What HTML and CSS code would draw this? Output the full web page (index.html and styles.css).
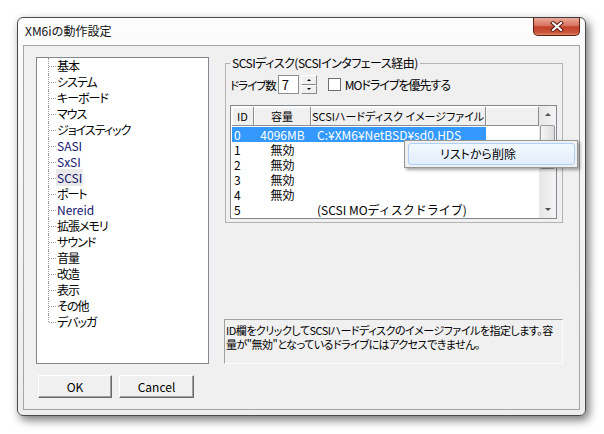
FILE: index.html
```html
<!DOCTYPE html>
<html lang="ja">
<head>
    <meta charset="UTF-8">
    <title>XM6iの動作設定</title>
    <link rel="stylesheet" href="styles.css">
</head>
<body>
    <div class="window">
        <div class="titlebar">
            <span class="title">XM6iの動作設定</span>
            <button class="close-btn">
                <svg width="14" height="11" viewBox="0 0 14 11">
                    <path d="M3 2 L11 9 M11 2 L3 9" stroke="#5a1c14" stroke-width="4" stroke-linecap="square" fill="none"/>
                    <path d="M3 2 L11 9 M11 2 L3 9" stroke="#ffffff" stroke-width="2" stroke-linecap="square" fill="none"/>
                </svg>
            </button>
        </div>

        <div class="client">
            <div class="main">
                <!-- settings tree -->
                <div class="tree">
                    <ul>
                        <li>基本</li>
                        <li>システム</li>
                        <li>キーボード</li>
                        <li>マウス</li>
                        <li>ジョイスティック</li>
                        <li class="en">SASI</li>
                        <li class="en">SxSI</li>
                        <li class="en"><span class="sel">SCSI</span></li>
                        <li>ポート</li>
                        <li class="en">Nereid</li>
                        <li>拡張メモリ</li>
                        <li>サウンド</li>
                        <li>音量</li>
                        <li>改造</li>
                        <li>表示</li>
                        <li>その他</li>
                        <li>デバッガ</li>
                    </ul>
                </div>

                <div class="panel">
                    <fieldset class="group">
                        <legend>SCSIディスク(SCSIインタフェース経由)</legend>
                        <div class="drive-row">
                            <span class="drive-label">ドライブ数</span>
                            <span class="edit">7</span>
                            <span class="spin">
                                <span class="spin-btn"><i class="arrow-up"></i></span>
                                <span class="spin-btn"><i class="arrow-down"></i></span>
                            </span>
                            <span class="check"></span>
                            <span class="check-label">MOドライブを優先する</span>
                        </div>

                        <div class="listview">
                            <div class="list-body">
                                <div class="list-head">
                                    <span class="col-id">ID</span>
                                    <span class="col-size">容量</span>
                                    <span class="col-file">SCSIハードディスク イメージファイル</span>
                                    <span class="col-rest"></span>
                                </div>
                                <div class="row selected">
                                    <span class="col-id">0</span>
                                    <span class="col-size">4096MB</span>
                                    <span class="col-file">C:¥XM6¥NetBSD¥sd0.HDS</span>
                                </div>
                                <div class="row"><span class="col-id">1</span><span class="col-size">無効</span><span class="col-file"></span></div>
                                <div class="row"><span class="col-id">2</span><span class="col-size">無効</span><span class="col-file"></span></div>
                                <div class="row"><span class="col-id">3</span><span class="col-size">無効</span><span class="col-file"></span></div>
                                <div class="row"><span class="col-id">4</span><span class="col-size">無効</span><span class="col-file"></span></div>
                                <div class="row"><span class="col-id">5</span><span class="col-size"></span><span class="col-file">(SCSI MOディスクドライブ)</span></div>
                            </div>
                            <div class="scrollbar">
                                <span class="sb-btn"><i class="sb-up"></i></span>
                                <span class="sb-track"><span class="sb-thumb"></span></span>
                                <span class="sb-btn"><i class="sb-down"></i></span>
                            </div>

                            <!-- right click menu -->
                            <div class="context-menu">
                                <div class="menu-item">リストから削除</div>
                            </div>
                        </div>
                    </fieldset>

                    <div class="help">ID欄をクリックしてSCSIハードディスクのイメージファイルを指定します。容<br>量が"無効"となっているドライブにはアクセスできません。</div>
                </div>
            </div>

            <div class="buttons">
                <button class="btn btn-ok">OK</button>
                <button class="btn btn-cancel">Cancel</button>
            </div>
        </div>
    </div>
</body>
</html>
```

FILE: styles.css
```css
* {
    margin: 0;
    padding: 0;
    box-sizing: border-box;
}

body {
    width: 604px;
    height: 434px;
    overflow: hidden;
    background: #ffffff;
    font-family: "Noto Sans CJK JP", sans-serif;
    font-size: 12px;
    color: #000;
}

/* Window frame */
.window {
    margin: 17px 0 0 17px;
    width: 569px;
    height: 399px;
    border: 1px solid #4b4b4b;
    border-radius: 6px;
    background: linear-gradient(#fcfcfc, #ededed);
    padding: 0 5px 5px;
    box-shadow: 3px 4px 10px rgba(0, 0, 0, 0.55);
    display: flex;
    flex-direction: column;
}

.titlebar {
    height: 27px;
    display: flex;
    justify-content: space-between;
    align-items: flex-start;
}

.title {
    padding: 6px 0 0 2px;
    font-size: 12px;
    line-height: 14px;
    color: #111;
}

.close-btn {
    width: 47px;
    height: 19px;
    margin-top: -1px;
    border: 1px solid #5a1f17;
    border-top-color: #3e3e3e;
    border-radius: 0 0 5px 5px;
    background: linear-gradient(#eaa999, #d8725d 45%, #c2412c 52%, #cd5539 85%, #e0876b);
    display: flex;
    align-items: center;
    justify-content: center;
}

.client {
    flex: 1;
    border: 1px solid #a5a5a5;
    background: #f0f0f0;
    padding: 11px 0 0 12px;
}

.main {
    display: flex;
    gap: 15px;
    height: 307px;
}

/* Tree */
.tree {
    width: 173px;
    border: 1px solid #828790;
    background: #fff;
    font-feature-settings: "palt";
    letter-spacing: -1px;
}

.tree ul {
    list-style: none;
}

.tree li {
    position: relative;
    height: 16px;
    line-height: 16px;
    padding-left: 20px;
    white-space: nowrap;
}

.tree li::before {
    content: "";
    position: absolute;
    left: 11px;
    top: 0;
    height: 16px;
    border-left: 1px dotted #9a9a9a;
}

.tree li:last-child::before {
    height: 8px;
}

.tree li::after {
    content: "";
    position: absolute;
    left: 12px;
    top: 8px;
    width: 7px;
    border-top: 1px dotted #9a9a9a;
}

.tree li.en {
    color: #14146e;
    letter-spacing: 0;
}

.tree .sel {
    background: #e9e9e9;
    padding: 0 1px;
    margin-left: -1px;
}

/* Right side */
.panel {
    width: 339px;
    display: flex;
    flex-direction: column;
    justify-content: space-between;
}

.group {
    margin: -2px 0 0 1px;
    width: 338px;
    height: 168px;
    border: 1px solid #b3b3b3;
    padding: 4px 5px 3px 4px;
    font-feature-settings: "palt";
}

.group legend {
    padding: 0 2px;
    line-height: 16px;
    letter-spacing: -0.5px;
}

.drive-row {
    display: flex;
    align-items: center;
    height: 19px;
}

.drive-label {
    white-space: nowrap;
    font-size: 11.5px;
    letter-spacing: -1px;
}

.edit {
    width: 21px;
    height: 19px;
    margin-left: 2px;
    border: 1px solid #8e8f8f;
    background: #fff;
    padding-left: 3px;
    font-size: 13px;
    line-height: 17px;
}

.spin {
    width: 16px;
    height: 19px;
    margin-left: 2px;
    display: flex;
    flex-direction: column;
}

.spin-btn {
    flex: 1;
    background: #f0f0f0;
    border: 1px solid;
    border-color: #fff #8a8a8a #8a8a8a #fff;
    display: flex;
    align-items: center;
    justify-content: center;
}

.arrow-up {
    border-left: 2px solid transparent;
    border-right: 2px solid transparent;
    border-bottom: 2px solid #000;
}

.arrow-down {
    border-left: 2px solid transparent;
    border-right: 2px solid transparent;
    border-top: 2px solid #000;
}

.check {
    width: 13px;
    height: 13px;
    margin-left: 11px;
    border: 1px solid #707070;
    background: #fff;
}

.check-label {
    margin-left: 4px;
    white-space: nowrap;
    letter-spacing: -1px;
}

/* List view */
.listview {
    position: relative;
    margin-top: 11px;
    width: 327px;
    height: 114px;
    border: 1px solid #828790;
    background: #fff;
    display: flex;
}

.list-body {
    flex: 1;
    padding: 1px 0 0 1px;
    font-feature-settings: normal;
}

.list-head {
    display: flex;
    height: 19px;
}

.list-head span {
    background: #f0f0f0;
    border-right: 1px solid #8c8c8c;
    border-bottom: 1px solid #8c8c8c;
    box-shadow: inset 1px 1px 0 #fff;
    text-align: center;
    line-height: 18px;
    font-size: 11px;
    font-feature-settings: "palt";
    white-space: nowrap;
    overflow: hidden;
}

.col-id {
    width: 22px;
    flex: none;
}

.col-size {
    width: 57px;
    flex: none;
}

.col-file {
    width: 175px;
    flex: none;
}

.list-head .col-rest {
    flex: 1;
}

.row {
    display: flex;
    width: 254px;
    height: 15px;
    line-height: 15px;
    white-space: nowrap;
}

.list-head + .row {
    margin-top: 1px;
}

.row .col-id {
    padding-left: 2px;
}

.row .col-size {
    text-align: center;
}

.row .col-file {
    padding-left: 6px;
}

.row.selected {
    background: #3399ff;
    color: #fff;
}

.scrollbar {
    width: 17px;
    display: flex;
    flex-direction: column;
    background: linear-gradient(90deg, #e6e6e6, #f4f4f4);
}

.sb-btn {
    height: 17px;
    display: flex;
    align-items: center;
    justify-content: center;
}

.sb-up {
    border-left: 3px solid transparent;
    border-right: 3px solid transparent;
    border-bottom: 3px solid #505050;
}

.sb-down {
    border-left: 3px solid transparent;
    border-right: 3px solid transparent;
    border-top: 3px solid #505050;
}

.sb-track {
    flex: 1;
    padding: 2px 1px 0;
}

.sb-thumb {
    display: block;
    height: 44px;
    border: 1px solid #9b9b9b;
    border-radius: 2px;
    background: linear-gradient(90deg, #f5f5f5, #dcdcdc);
}

.context-menu {
    position: absolute;
    left: 173px;
    top: 34px;
    width: 174px;
    height: 28px;
    border: 1px solid #979797;
    background: #f0f0f0;
    box-shadow: 2px 2px 3px rgba(0, 0, 0, 0.35);
    padding: 2px 2px 2px 3px;
}

.menu-item {
    height: 22px;
    border: 1px solid #aecff7;
    border-radius: 3px;
    background: linear-gradient(#f2f8fe, #e2eefb);
    padding-left: 31px;
    line-height: 20px;
}

/* Help text */
.help {
    width: 339px;
    height: 45px;
    border: 1px solid;
    border-color: #a0a0a0 #fcfcfc #fcfcfc #a0a0a0;
    padding: 3px 0 0 1px;
    font-size: 11px;
    line-height: 14px;
    letter-spacing: -0.5px;
    white-space: nowrap;
    overflow: hidden;
    font-feature-settings: "palt";
}

/* Buttons */
.buttons {
    display: flex;
    gap: 7px;
    margin-top: 11px;
    padding-left: 2px;
}

.btn {
    height: 23px;
    font-family: "Noto Sans CJK JP", sans-serif;
    font-size: 12px;
    line-height: 20px;
    color: #000;
    background: #f0f0f0;
    border: 1px solid;
    border-color: #fff #696969 #696969 #fff;
    box-shadow: inset -1px -1px 0 #a0a0a0;
}

.btn-ok {
    width: 74px;
}

.btn-cancel {
    width: 75px;
}
```
